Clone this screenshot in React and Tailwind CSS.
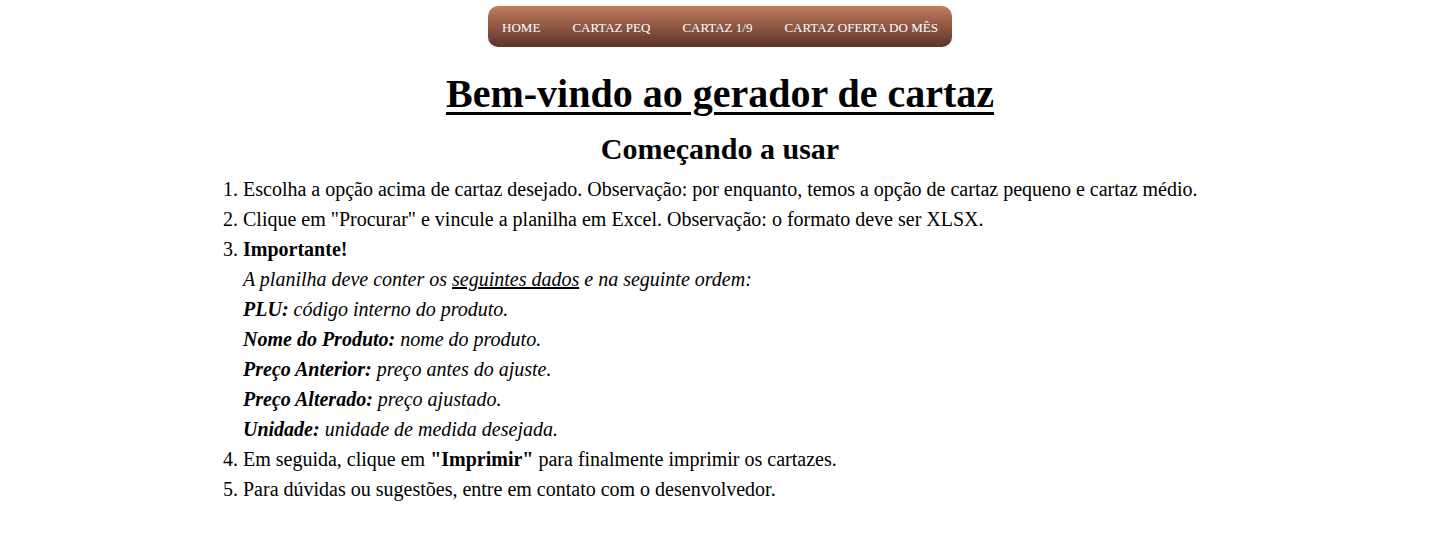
import React from 'react'

const links = ['HOME', 'CARTAZ PEQ', 'CARTAZ 1/9', 'CARTAZ OFERTA DO MÊS']

const campos = [
  ['PLU:', 'código interno do produto.'],
  ['Nome do Produto:', 'nome do produto.'],
  ['Preço Anterior:', 'preço antes do ajuste.'],
  ['Preço Alterado:', 'preço ajustado.'],
  ['Unidade:', 'unidade de medida desejada.'],
]

export default function App () {
  return (
    <div className="min-h-screen bg-white text-black font-['Liberation_Serif',serif]">
      <nav className="flex justify-center pt-[6px]">
        <ul className="flex items-center gap-1 h-[41px] rounded-[10px] bg-gradient-to-b from-[#c27d5c] to-[#5c342b]">
          {links.map((l) => (
            <li key={l}>
              <a href="#" className="px-[14px] text-[13px] text-white">{l}</a>
            </li>
          ))}
        </ul>
      </nav>

      <h1 className="mt-[23px] text-center text-[40px] leading-[48px] font-bold underline decoration-[3px] underline-offset-[5px]">
        Bem-vindo ao gerador de cartaz
      </h1>
      <h2 className="mt-[13px] text-center text-[30px] leading-[36px] font-bold">Começando a usar</h2>

      <ol className="mt-[7px] ml-[203px] pl-[40px] list-decimal text-[20px] leading-[30px]">
        <li>Escolha a opção acima de cartaz desejado. Observação: por enquanto, temos a opção de cartaz pequeno e cartaz médio.</li>
        <li>Clique em "Procurar" e vincule a planilha em Excel. Observação: o formato deve ser XLSX.</li>
        <li>
          <b>Importante!</b>
          <p className="italic">A planilha deve conter os <u>seguintes dados</u> e na seguinte ordem:</p>
          {campos.map(([k, v]) => (
            <p key={k} className="italic"><b>{k}</b> {v}</p>
          ))}
        </li>
        <li>Em seguida, clique em <b>"Imprimir"</b> para finalmente imprimir os cartazes.</li>
        <li>Para dúvidas ou sugestões, entre em contato com o desenvolvedor.</li>
      </ol>
    </div>
  )
}
